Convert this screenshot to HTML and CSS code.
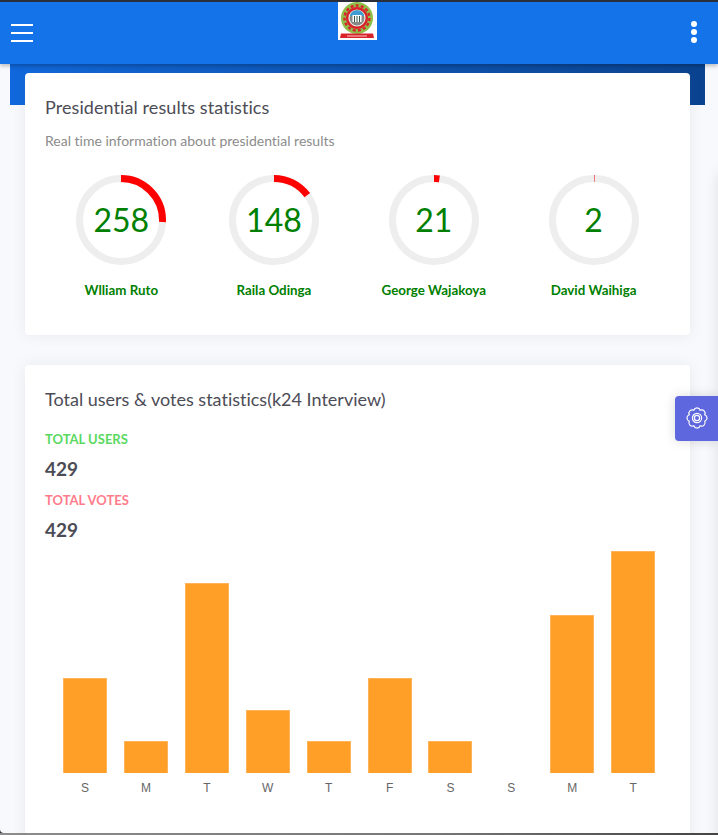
FILE: index.html
```html
<!DOCTYPE html>
<html>
<head>
<meta charset="utf-8">
<title>Presidential results</title>
<link rel="stylesheet" href="styles.css">
</head>
<body>

<div class="page">
  <nav class="topbar">
    <div class="burger"><span></span><span></span><span></span></div>
    <svg class="logo" viewBox="0 0 39 38" width="39" height="38">
      <rect width="39" height="38" fill="#fff"/>
      <circle cx="19" cy="16" r="16" fill="#8fc04a"/>
      <circle cx="19" cy="16" r="11" fill="#d8232a"/>
      <circle cx="19" cy="16" r="12.5" fill="none" stroke="#d8232a" stroke-width="2.4" stroke-dasharray="3 2.2"/>
      <circle cx="19" cy="16" r="8.6" fill="#e8efe6"/>
      <circle cx="19" cy="16" r="7.4" fill="#858a88"/>
      <path d="M11.8 14a7.4 7.4 0 0 1 14.4 0z" fill="#3f9bd0"/>
      <rect x="14.5" y="13" width="9" height="7" fill="#fff"/>
      <path d="M16.5 14v6M19 14v6M21.5 14v6" stroke="#3a5a4a" stroke-width="1"/>
      <path d="M3 31.500h32l1 4.500H2z" fill="#d8232a"/>
      <path d="M9 34h20" stroke="#f6c9c9" stroke-width="1"/>
    </svg>
    <div class="dots"><span></span><span></span><span></span></div>
  </nav>

  <div class="band"></div>

  <main class="content">
    <section class="card card-results">
      <h4 class="card-title">Presidential results statistics</h4>
      <p class="card-sub">Real time information about presidential results</p>
      <div class="rings">
        <div class="ring-item">
          <div class="ring">
            <svg viewBox="0 0 90 90" width="90" height="90">
              <circle class="ring-bg" cx="45" cy="45" r="41.5"/>
              <circle class="ring-val" cx="45" cy="45" r="41.5" pathLength="1000" stroke-dasharray="258 1000"/>
            </svg>
            <span class="ring-num">258</span>
          </div>
          <div class="ring-name">Wlliam Ruto</div>
        </div>
        <div class="ring-item">
          <div class="ring">
            <svg viewBox="0 0 90 90" width="90" height="90">
              <circle class="ring-bg" cx="45" cy="45" r="41.5"/>
              <circle class="ring-val" cx="45" cy="45" r="41.5" pathLength="1000" stroke-dasharray="148 1000"/>
            </svg>
            <span class="ring-num">148</span>
          </div>
          <div class="ring-name">Raila Odinga</div>
        </div>
        <div class="ring-item">
          <div class="ring">
            <svg viewBox="0 0 90 90" width="90" height="90">
              <circle class="ring-bg" cx="45" cy="45" r="41.5"/>
              <circle class="ring-val" cx="45" cy="45" r="41.5" pathLength="1000" stroke-dasharray="21 1000"/>
            </svg>
            <span class="ring-num">21</span>
          </div>
          <div class="ring-name">George Wajakoya</div>
        </div>
        <div class="ring-item">
          <div class="ring">
            <svg viewBox="0 0 90 90" width="90" height="90">
              <circle class="ring-bg" cx="45" cy="45" r="41.5"/>
              <circle class="ring-val" cx="45" cy="45" r="41.5" pathLength="1000" stroke-dasharray="2 1000"/>
            </svg>
            <span class="ring-num">2</span>
          </div>
          <div class="ring-name">David Waihiga</div>
        </div>
      </div>
    </section>

    <section class="card card-totals">
      <h4 class="card-title">Total users &amp; votes statistics(k24 Interview)</h4>
      <div class="stat-label stat-users">TOTAL USERS</div>
      <div class="stat-num">429</div>
      <div class="stat-label stat-votes">TOTAL VOTES</div>
      <div class="stat-num">429</div>
      <div class="chart">
        <div class="col"><div class="bar" style="height:95px"></div><span>S</span></div>
        <div class="col"><div class="bar" style="height:32px"></div><span>M</span></div>
        <div class="col"><div class="bar" style="height:190px"></div><span>T</span></div>
        <div class="col"><div class="bar" style="height:63px"></div><span>W</span></div>
        <div class="col"><div class="bar" style="height:32px"></div><span>T</span></div>
        <div class="col"><div class="bar" style="height:95px"></div><span>F</span></div>
        <div class="col"><div class="bar" style="height:32px"></div><span>S</span></div>
        <div class="col"><div class="bar bar-empty"></div><span>S</span></div>
        <div class="col"><div class="bar" style="height:158px"></div><span>M</span></div>
        <div class="col"><div class="bar" style="height:222px"></div><span>T</span></div>
      </div>
    </section>
  </main>

  <!-- closed side panel, only its shadow shows at the right edge -->
  <div class="side-panel"></div>

  <div class="settings">
    <svg viewBox="0 0 24 24" width="24" height="24" fill="none" stroke="#fff" stroke-width="1.2">
      <path d="M19.76 8.79A3.4 3.4 0 0 1 19.76 15.21A3.4 3.4 0 0 1 15.21 19.76A3.4 3.4 0 0 1 8.79 19.76A3.4 3.4 0 0 1 4.24 15.21A3.4 3.4 0 0 1 4.24 8.79A3.4 3.4 0 0 1 8.79 4.24A3.4 3.4 0 0 1 15.21 4.24A3.4 3.4 0 0 1 19.76 8.79Z"/>
      <circle cx="12" cy="12" r="4.6"/>
      <circle cx="12" cy="12" r="2.6"/>
    </svg>
  </div>
</div>
<div class="screen-edge"></div>

</body>
</html>
```

FILE: styles.css
```css
html, body {
  margin: 0;
  padding: 0;
  height: 100%;
}

body {
  background: #2b2f3a;
  font-family: "Lato", "Open Sans", sans-serif;
  font-variant-ligatures: none;
  overflow: hidden;
}

.page {
  position: relative;
  height: 831px;
  margin-top: 2px;
  background: #f8f9fc;
  overflow: hidden;
  border-radius: 0 0 0 4px;
}

.screen-edge {
  height: 2px;
  background: linear-gradient(to right, #8c8c8c, #777777 60%, #444444);
}

.topbar {
  display: flex;
  align-items: flex-start;
  justify-content: space-between;
  height: 62px;
  padding: 0 21px 0 11px;
  background: #1573ea;
  box-shadow: 0 2px 4px rgba(0, 0, 0, 0.25);
  position: relative;
  z-index: 2;
}

.burger {
  display: flex;
  flex-direction: column;
  gap: 6px;
  width: 22px;
  margin-top: 22px;
}

.burger span {
  display: block;
  height: 2px;
  background: #fff;
}

.logo {
  display: block;
  margin-left: -10px;
}

.dots {
  display: flex;
  flex-direction: column;
  gap: 2px;
  margin-top: 19px;
}

.dots span {
  width: 6px;
  height: 6px;
  border-radius: 50%;
  background: #fff;
}

.band {
  height: 41px;
  margin: 0 13px 0 10px;
  background: linear-gradient(to right, #1068dc, #0a4390);
}

.content {
  position: relative;
  margin-top: -32px;
  padding: 0 28px 0 25px;
}

.card {
  background: #fff;
  border-radius: 4px;
  box-shadow: 0 0 14px rgba(90, 100, 130, 0.1);
  padding: 23px 20px;
}

.card-results {
  height: 262px;
  box-sizing: border-box;
  margin-bottom: 30px;
}

.card-results .card-title {
  letter-spacing: 0.08px;
}

.card-totals {
  box-sizing: border-box;
  height: 480px;
}

.card-title {
  margin: 0;
  font-size: 18px;
  font-weight: 400;
  line-height: 22px;
  color: #4c4c56;
}

.card-sub {
  margin: 14px 0 0;
  font-size: 14px;
  line-height: 18px;
  color: #8c8c8c;
}

.rings {
  display: flex;
  justify-content: space-around;
  margin-top: 25px;
}

.ring-item {
  display: flex;
  flex-direction: column;
  align-items: center;
}

.ring {
  position: relative;
  width: 90px;
  height: 90px;
}

.ring svg {
  display: block;
  transform: rotate(-90deg);
}

.ring-bg, .ring-val {
  fill: none;
  stroke-width: 7;
}

.ring-bg {
  stroke: #eeeeee;
}

.ring-val {
  stroke: #ff0000;
}

.ring-num {
  position: absolute;
  left: 0;
  right: 0;
  top: 0;
  line-height: 90px;
  text-align: center;
  font-size: 32px;
  color: #008000;
}

.ring-name {
  margin-top: 16px;
  font-size: 13.33px;
  font-weight: 700;
  line-height: 18px;
  color: #008000;
}

.stat-label {
  font-size: 13px;
  font-weight: 700;
  line-height: 16px;
}

.stat-users {
  margin-top: 21px;
  color: #5ad95f;
}

.stat-votes {
  margin-top: 11px;
  color: #ff7c8b;
}

.stat-num {
  margin-top: 10px;
  font-size: 19px;
  font-weight: 700;
  line-height: 24px;
  color: #4c4c56;
}

.chart {
  display: grid;
  grid-template-columns: repeat(10, 1fr);
  align-items: end;
  margin: 0 6.4px 0 9.6px;
  height: 253px;
}

.col {
  display: flex;
  flex-direction: column;
  align-items: center;
}

.bar {
  box-sizing: border-box;
  width: 44px;
  background: #ff9f27;
  border: 1px solid #ffb35a;
  border-bottom: 0;
}

.bar-empty {
  height: 0;
  border: 0;
}

.col span {
  margin-top: 8px;
  font-family: "Liberation Sans", Arial, sans-serif;
  font-size: 12px;
  line-height: 14px;
  color: #666666;
}

.side-panel {
  position: absolute;
  left: 100%;
  top: 170px;
  width: 40px;
  height: 700px;
  box-shadow: 0 0 14px rgba(0, 0, 0, 0.1);
}

.settings {
  position: absolute;
  right: 0;
  top: 394px;
  box-sizing: border-box;
  display: flex;
  align-items: center;
  justify-content: center;
  width: 43px;
  height: 45px;
  padding-bottom: 2px;
  background: #5e67de;
  border-radius: 4px 0 0 4px;
  box-shadow: 0 0 12px rgba(0, 0, 0, 0.15);
}
```
